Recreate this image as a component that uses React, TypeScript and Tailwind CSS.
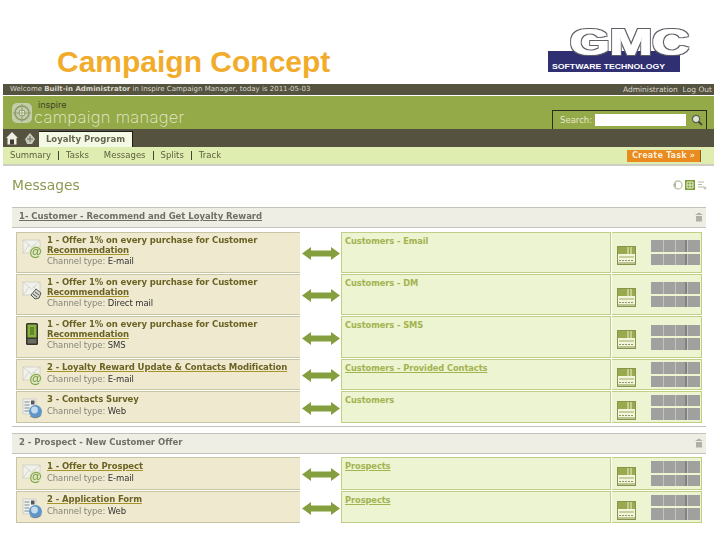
import React from "react";

type Kind = "mail" | "direct" | "sms" | "web";
type Row = { h: string; kind: Kind; l1: string; l2?: string; u1?: boolean; ch: string; mid: string; um?: boolean; top: string; rep: string };

function TaskIcon({ kind }: { kind: Kind }) {
  if (kind === "sms")
    return (
      <svg width="20" height="24" viewBox="2 2 20 24">
        <rect x="6" y="3" width="12" height="22" rx="1.5" fill="#33352a" />
        <rect x="7.5" y="4.5" width="9" height="13" fill="#8bb040" />
        <rect x="10" y="7" width="4" height="8" fill="#5f8a2a" />
        <rect x="7.5" y="19" width="9" height="4.5" fill="#6a6c60" />
      </svg>
    );
  if (kind === "web")
    return (
      <svg width="22" height="22" viewBox="0 0 22 22">
        <rect x="1" y="2" width="13" height="15" fill="#eef0ee" stroke="#c4c6c0" strokeWidth="0.7" />
        <path d="M2.5 5h5M2.5 8h5M2.5 11h5M2.5 14h5" stroke="#7d8a90" strokeWidth="1.2" />
        <rect x="9" y="3.5" width="3.5" height="4" fill="#555" />
        <circle cx="13.5" cy="14.5" r="6.5" fill="#5f95c8" />
        <circle cx="12.5" cy="13" r="3.4" fill="#c5dcee" />
        <path d="M8 19c3 2.5 8 2.5 11.5-1" stroke="#777" strokeWidth="0.8" fill="none" />
      </svg>
    );
  return (
    <svg width="22" height="22" viewBox="0 0 22 22">
      <rect x="1" y="2" width="17" height="13" fill="#f2f2ec" stroke="#c9c9c2" strokeWidth="0.7" />
      <path d="M1 2l8.5 7L18 2M1 15l6-8M18 15l-6-8" stroke="#c9c9c2" strokeWidth="0.7" fill="none" />
      {kind === "mail" ? (
        <>
          <circle cx="13.5" cy="14" r="6.4" fill="#dfe6c8" />
          <text x="13.5" y="18" textAnchor="middle" fontSize="12.5" fontWeight="700" fill="#7fa03a" fontFamily="Liberation Sans, sans-serif">@</text>
        </>
      ) : (
        <path d="M9 15l5-6 5 4-2 5-4 1zM11 14l4 3M13 12l4 3" fill="#d8d8d2" stroke="#55564e" strokeWidth="1" />
      )}
    </svg>
  );
}

function Arrow() {
  return (
    <svg width="38" height="15" viewBox="0 0 38 15" className="block">
      <path d="M0 7.5L9 1v3.5h20V1l9 6.5L29 14v-3.5H9V14z" fill="#859f3f" />
    </svg>
  );
}

function Report() {
  return (
    <svg width="19" height="19" viewBox="0 0 19 19" className="block">
      <rect x="0.5" y="0.5" width="18" height="18" fill="#f3f6dc" stroke="#87944c" />
      <rect x="1" y="1" width="17" height="7" fill="#9aa94e" />
      <path d="M11 1v7M14 1v7" stroke="#eef2d0" strokeWidth="1" />
      <rect x="2" y="10" width="15" height="2" fill="#c9cf9e" />
      <path d="M2 14.5h15" stroke="#8f9660" strokeDasharray="2 1" />
      <path d="M1 17h17" stroke="#87944c" />
    </svg>
  );
}

function MiniGrid() {
  const row = (
    <div className="grid grid-cols-[12px_11px_11px_12px] h-[11.5px] gap-px bg-[#c4c4be]">
      <div className="bg-[#a0a09e]" />
      <div className="bg-[#a0a09e]" />
      <div className="bg-[#a0a09e] border-r-2 border-[#82827f]" />
      <div className="bg-[#a0a09e]" />
    </div>
  );
  return (
    <div className="flex flex-col gap-[2px] w-[49px]">
      {row}
      {row}
    </div>
  );
}

function TaskRow({ r }: { r: Row }) {
  return (
    <div className={`flex ${r.h} ml-[4px]`}>
      <div className="w-[284px] bg-[#efe9cf] border-t border-b border-l border-[#c8c5a4] flex">
        <div className="w-[30px] shrink-0 pl-[5px] pt-[5px]">
          <TaskIcon kind={r.kind} />
        </div>
        <div className={`${r.top} text-[8.5px] leading-[9.5px]`}>
          <div className="font-bold text-[#6b6324] tracking-[-0.1px] whitespace-nowrap">
            <span className={r.u1 ? "underline decoration-[#a8952a]" : ""}>{r.l1}</span>
            {r.l2 && (
              <>
                <br />
                <span className="underline decoration-[#a8952a]">{r.l2}</span>
              </>
            )}
          </div>
          <div className="mt-[2px] text-[#85857a] tracking-[-0.1px]">
            Channel type: <span className="text-[#333]">{r.ch}</span>
          </div>
        </div>
      </div>
      <div className="w-[41px] flex items-center justify-center pt-[2px]">
        <Arrow />
      </div>
      <div className="w-[270px] bg-[#ecf4d1] border border-[#bfcf85] pl-[3px] pt-[4px] text-[8.3px] leading-[9px] font-bold text-[#a3b350] tracking-[-0.08px]">
        <span className={r.um ? "underline" : ""}>{r.mid}</span>
      </div>
      <div className="w-[90px] ml-px bg-[#ecf4d1] border-t border-b border-r border-[#bfcf85] flex items-center pl-[5px] pr-[1px]">
        <div className={r.rep}>
          <Report />
        </div>
        <div className="ml-auto">
          <MiniGrid />
        </div>
      </div>
    </div>
  );
}

function SectionHead({ text, u }: { text: string; u?: boolean }) {
  return (
    <div className="w-[694px] h-[21px] bg-[#eeeee5] border-t border-b border-[#c3c3bc] flex items-center pl-[7px] pr-[2px] pb-[2px] text-[8.5px] font-bold text-[#6f6f64] tracking-[-0.03px]">
      <span className={u ? "underline" : ""}>{text}</span>
      <svg width="10" height="10" viewBox="0 0 10 10" className="ml-auto">
        <path d="M1 3h8L5 .5zM2 4h6v5.5H2z" fill="#b0b0a6" />
      </svg>
    </div>
  );
}

const offer = "1 - Offer 1% on every purchase for Customer";
const rows1: Row[] = [
  { h: "h-[41px]", kind: "mail", l1: offer, l2: "Recommendation", ch: "E-mail", mid: "Customers - Email", top: "pt-[3px]", rep: "mt-[5px]" },
  { h: "h-[41px] mt-[1px]", kind: "direct", l1: offer, l2: "Recommendation", ch: "Direct mail", mid: "Customers - DM", top: "pt-[3px]", rep: "mt-[5px]" },
  { h: "h-[42px] mt-[1px]", kind: "sms", l1: offer, l2: "Recommendation", ch: "SMS", mid: "Customers - SMS", top: "pt-[3px]", rep: "mt-[5px]" },
  { h: "h-[31px] mt-[1px]", kind: "mail", l1: "2 - Loyalty Reward Update & Contacts Modification", u1: true, ch: "E-mail", mid: "Customers - Provided Contacts", um: true, top: "pt-[3px]", rep: "mt-[6px]" },
  { h: "h-[32px] mt-[1px]", kind: "web", l1: "3 - Contacts Survey", ch: "Web", mid: "Customers", top: "pt-[3px]", rep: "mt-[6px]" },
];
const rows2: Row[] = [
  { h: "h-[33px]", kind: "mail", l1: "1 - Offer to Prospect", u1: true, ch: "E-mail", mid: "Prospects", um: true, top: "pt-[4px]", rep: "mt-[6px]" },
  { h: "h-[32px] mt-[1px]", kind: "web", l1: "2 - Application Form", u1: true, ch: "Web", mid: "Prospects", um: true, top: "pt-[3px]", rep: "mt-[6px]" },
];

export default function App() {
  return (
    <div className="w-[720px] h-[540px] bg-white overflow-hidden font-['DejaVu_Sans',sans-serif]">
      <div className="h-[84px] flex items-start">
        <h1 className="ml-[57px] mt-[45px] text-[30px] leading-[34px] font-bold text-[#f1ac2b] font-['Liberation_Sans',sans-serif]">
          Campaign Concept
        </h1>
        <svg width="143" height="44" viewBox="0 0 143 44" className="ml-auto mr-[29px] mt-[28px] block">
          <defs>
            <filter id="gmcFat" x="-10%" y="-20%" width="120%" height="140%">
              <feMorphology in="SourceAlpha" operator="dilate" radius="1.5 0.7" result="outer" />
              <feFlood floodColor="#5f5f68" />
              <feComposite in2="outer" operator="in" result="outerC" />
              <feMorphology in="SourceAlpha" operator="dilate" radius="1 0.2" result="inner" />
              <feFlood floodColor="#ffffff" />
              <feComposite in2="inner" operator="in" result="innerC" />
              <feMerge>
                <feMergeNode in="outerC" />
                <feMergeNode in="innerC" />
              </feMerge>
            </filter>
          </defs>
          <rect x="0" y="23" width="132" height="21" fill="#2f2f72" />
          <text x="22" y="26.5" fontSize="36" fontWeight="900" fontFamily="Liberation Sans, sans-serif" fill="#fff" textLength="119" lengthAdjust="spacingAndGlyphs" filter="url(#gmcFat)">GMC</text>
          <text x="4" y="41" fontSize="8" fontWeight="700" fontFamily="Liberation Sans, sans-serif" fill="#fff" textLength="113" lengthAdjust="spacingAndGlyphs">SOFTWARE TECHNOLOGY</text>
        </svg>
      </div>

      <div className="ml-[3px] w-[711px] blur-[0.4px]">
        <div className="h-[11px] bg-[#55523f] flex items-center justify-between pl-[7px] pr-[2px] text-[#d9d9cc]">
          <span className="text-[7px]">
            Welcome <b>Built-in Administrator</b> in Inspire Campaign Manager, today is 2011-05-03
          </span>
          <span className="text-[7.5px]">Administration&nbsp;&nbsp;Log Out</span>
        </div>
        <div className="h-[34px] border-t border-white bg-[#94a948] flex">
          <svg width="22" height="22" viewBox="0 0 22 22" className="ml-[8px] mt-[6px]">
            <rect x="1" y="1" width="20" height="20" rx="5" fill="#c3cdaa" />
            <circle cx="11" cy="11" r="7" fill="none" stroke="#8b9a66" strokeWidth="1.5" />
            <circle cx="11" cy="11" r="3" fill="#eef1e2" stroke="#8b9a66" />
            <path d="M11 2v18M2 11h18" stroke="#8b9a66" strokeWidth="0.8" />
          </svg>
          <div className="ml-[1px] mt-[4px] text-[#e6ebcf] font-['Inter',sans-serif] font-extralight">
            <div className="text-[9px] leading-[9px] text-[#3f4528] font-normal pl-[4px]">inspire</div>
            <div className="mt-[1px] text-[16.5px] leading-[15px] tracking-[0.3px]">campaign manager</div>
          </div>
          <div className="ml-auto mr-[7px] mt-[14px] w-[155px] h-[19px] border-t border-l border-r border-[#2c2b20] flex items-center pl-[7px] text-[8.5px] text-[#e4e8cf]">
            <span>Search:</span>
            <div className="ml-[3px] w-[91px] h-[12px] bg-white" />
            <svg width="12" height="12" viewBox="0 0 12 12" className="ml-[5px]">
              <circle cx="5" cy="5" r="3.6" fill="#dfe4d4" stroke="#5d6050" strokeWidth="1.2" />
              <path d="M7.5 7.5L11 11" stroke="#4a4c40" strokeWidth="2" />
            </svg>
          </div>
        </div>
        <div className="h-[18px] bg-[#55523f] flex items-end">
          <svg width="12" height="13" viewBox="0 0 12 13" className="ml-[3px] mb-[2px]">
            <path d="M6 0L0 6h1.5v6.5h9V6H12z" fill="#efefe6" />
            <rect x="4" y="7.5" width="4" height="5" fill="#3d3c2c" />
          </svg>
          <svg width="12" height="12" viewBox="0 0 12 12" className="ml-[6px] mb-[2px]">
            <path d="M6 0l5 6-3 5H3L1 6z" fill="#c8c8bc" />
            <path d="M3 6h6M6 3v6" stroke="#6d6c58" />
          </svg>
          <div className="ml-[3px] w-[94px] h-[16px] bg-[#f4f9e6] border-t border-r border-[#1e1e14] flex items-center justify-center text-[8.5px] font-bold text-[#666650]">
            Loyalty Program
          </div>
        </div>
        <div className="h-[17px] bg-[#dfedb0] flex items-center pl-[7px] pr-[13px] text-[8.5px] text-[#5e6040]">
          <span>Summary</span>
          <span className="mx-[7px] w-px h-[9px] bg-[#44452f]" />
          <span>Tasks</span>
          <span className="mx-[7px] w-px h-[9px]" />
          <span>Messages</span>
          <span className="mx-[7px] w-px h-[9px] bg-[#44452f]" />
          <span>Splits</span>
          <span className="mx-[7px] w-px h-[9px] bg-[#44452f]" />
          <span>Track</span>
          <span className="ml-auto w-[74px] h-[12px] bg-[#ea8b20] border-r border-[#8a5a20] flex items-center justify-center text-[8px] font-bold text-[#fdf0d8] tracking-[0.2px]">
            Create Task »
          </span>
        </div>
        <div className="h-[2px] bg-[#cdcdc4]" />

        <div className="h-[41px] flex pl-[9px] pr-[7px] pt-[11px]">
          <h2 className="text-[13.8px] leading-[16px] font-normal text-[#8b9a50]">Messages</h2>
          <div className="ml-auto flex gap-[2px] items-start pt-[3px]">
            <svg width="10" height="10" viewBox="0 0 10 10">
              <circle cx="5" cy="5" r="4" fill="none" stroke="#c0c4b0" strokeWidth="1.3" />
              <path d="M0 5l3-2.5v5z" fill="#b0b4a0" />
            </svg>
            <svg width="10" height="10" viewBox="0 0 10 10">
              <rect width="10" height="10" fill="#7f9c3a" />
              <path d="M2 2h6v6H2zM2 5h6M5 2v6" stroke="#e6efcc" fill="none" />
            </svg>
            <svg width="10" height="10" viewBox="0 0 10 10">
              <path d="M1 2h6M1 4.5h4M1 7h6" stroke="#b8bca8" strokeWidth="1.2" />
              <circle cx="8" cy="8" r="1.5" fill="#c4c8b4" />
            </svg>
          </div>
        </div>

        <div className="ml-[9px]">
          <SectionHead text="1- Customer - Recommend and Get Loyalty Reward" u />
          <div className="mt-[4px]">
            {rows1.map((r, i) => (
              <TaskRow key={i} r={r} />
            ))}
          </div>
          <div className="mt-[3px] w-[694px] h-px bg-[#c3c3bc]" />
          <div className="mt-[6px]">
            <SectionHead text="2 - Prospect - New Customer Offer" />
          </div>
          <div className="mt-[3px]">
            {rows2.map((r, i) => (
              <TaskRow key={i} r={r} />
            ))}
          </div>
        </div>
      </div>
    </div>
  );
}
